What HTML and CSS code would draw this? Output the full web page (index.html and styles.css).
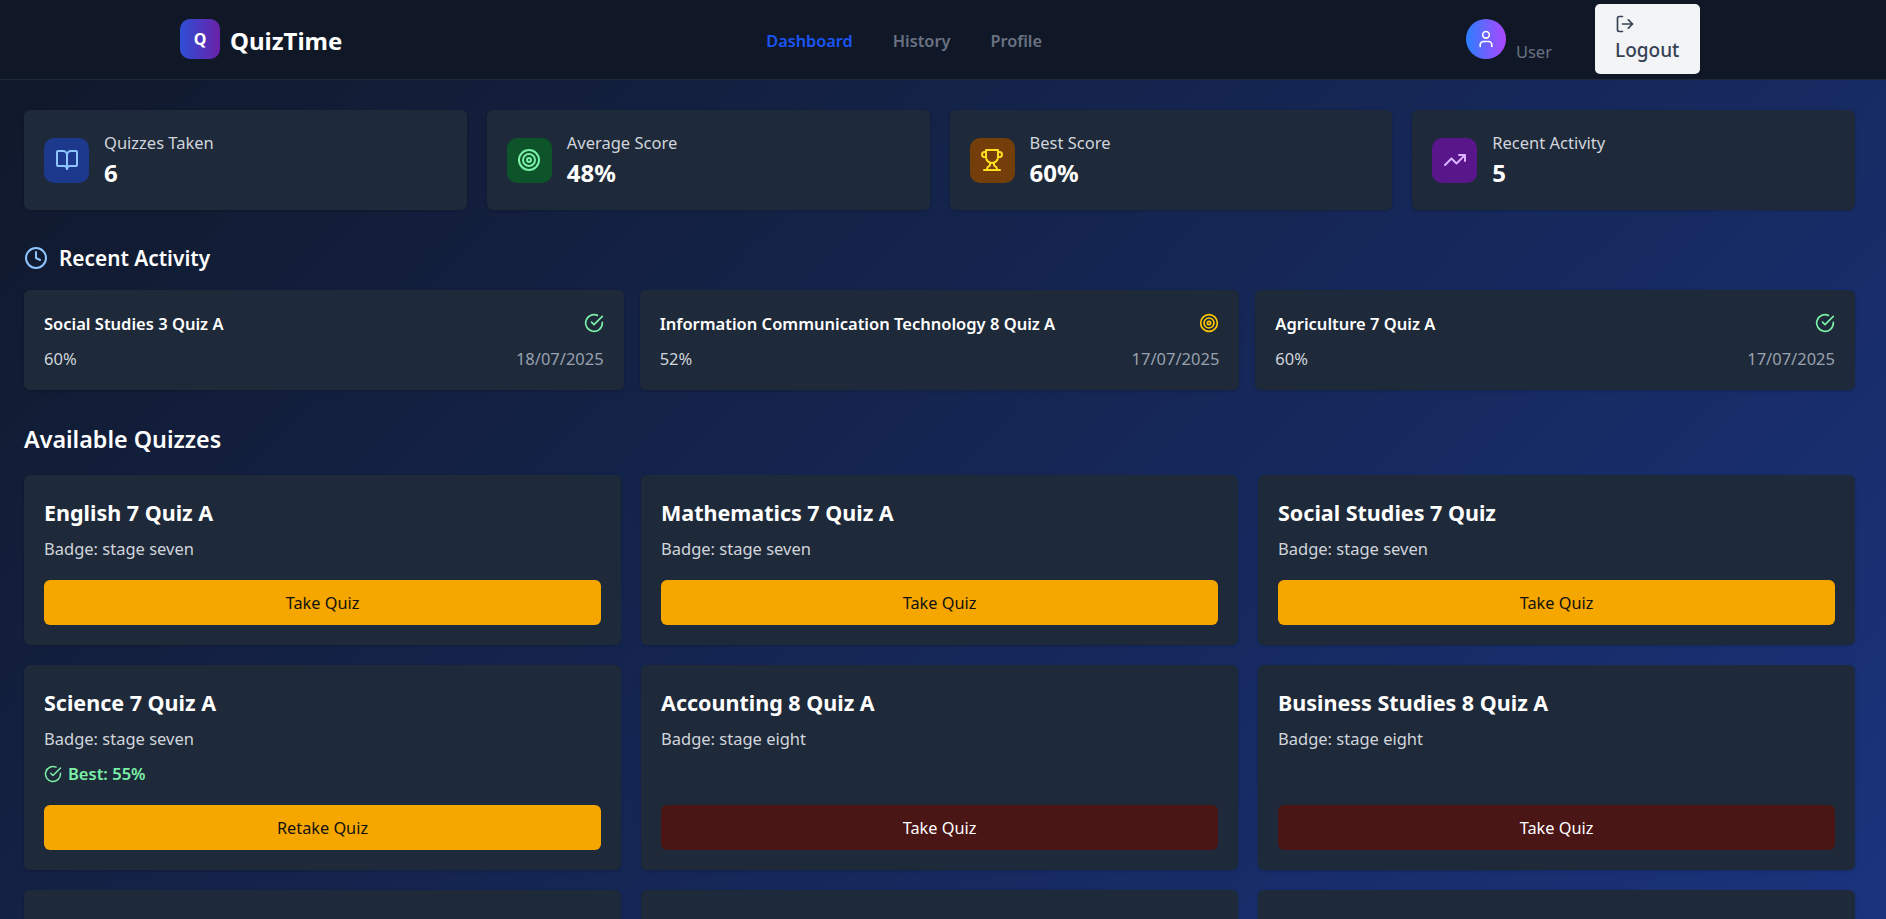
FILE: index.html
```html
<!DOCTYPE html>
<html lang="en">
<head>
    <meta charset="UTF-8">
    <meta name="viewport" content="width=device-width, initial-scale=1.0">
    <title>QuizTime</title>
    <link rel="stylesheet" href="styles.css">
</head>
<body>

    <header class="topbar">
        <div class="topbar-inner">
            <div class="brand">
                <div class="brand-mark">Q</div>
                <span class="brand-name">QuizTime</span>
            </div>
            <nav class="nav">
                <a class="nav-link active" href="#">Dashboard</a>
                <a class="nav-link" href="#">History</a>
                <a class="nav-link" href="#">Profile</a>
            </nav>
            <div class="account">
                <div class="avatar">
                    <svg class="icon-20" viewBox="0 0 24 24"><path d="M19 21v-2a4 4 0 0 0-4-4H9a4 4 0 0 0-4 4v2"/><circle cx="12" cy="7" r="4"/></svg>
                </div>
                <span class="user-name">User</span>
                <button class="logout" type="button">
                    <svg class="icon-20" viewBox="0 0 24 24"><path d="M9 21H5a2 2 0 0 1-2-2V5a2 2 0 0 1 2-2h4"/><polyline points="16 17 21 12 16 7"/><line x1="21" y1="12" x2="9" y2="12"/></svg>
                    <span>Logout</span>
                </button>
            </div>
        </div>
    </header>

    <main class="content">

        <section class="stats">
            <div class="card stat">
                <div class="stat-icon bg-blue">
                    <svg class="icon-24" viewBox="0 0 24 24"><path d="M12 7v14"/><path d="M3 18a1 1 0 0 1-1-1V4a1 1 0 0 1 1-1h5a4 4 0 0 1 4 4 4 4 0 0 1 4-4h5a1 1 0 0 1 1 1v13a1 1 0 0 1-1 1h-6a3 3 0 0 0-3 3 3 3 0 0 0-3-3z"/></svg>
                </div>
                <div>
                    <div class="stat-label">Quizzes Taken</div>
                    <div class="stat-value">6</div>
                </div>
            </div>
            <div class="card stat">
                <div class="stat-icon bg-green">
                    <svg class="icon-24" viewBox="0 0 24 24"><circle cx="12" cy="12" r="10"/><circle cx="12" cy="12" r="6"/><circle cx="12" cy="12" r="2"/></svg>
                </div>
                <div>
                    <div class="stat-label">Average Score</div>
                    <div class="stat-value">48%</div>
                </div>
            </div>
            <div class="card stat">
                <div class="stat-icon bg-orange">
                    <svg class="icon-24" viewBox="0 0 24 24"><path d="M6 9H4.5a2.5 2.5 0 0 1 0-5H6"/><path d="M18 9h1.5a2.5 2.5 0 0 0 0-5H18"/><path d="M4 22h16"/><path d="M10 14.66V17c0 .55-.47.98-.97 1.21C7.85 18.75 7 20.24 7 22"/><path d="M14 14.66V17c0 .55.47.98.97 1.21C16.15 18.75 17 20.24 17 22"/><path d="M18 2H6v7a6 6 0 0 0 12 0V2Z"/></svg>
                </div>
                <div>
                    <div class="stat-label">Best Score</div>
                    <div class="stat-value">60%</div>
                </div>
            </div>
            <div class="card stat">
                <div class="stat-icon bg-purple">
                    <svg class="icon-24" viewBox="0 0 24 24"><polyline points="22 7 13.5 15.5 8.5 10.5 2 17"/><polyline points="16 7 22 7 22 13"/></svg>
                </div>
                <div>
                    <div class="stat-label">Recent Activity</div>
                    <div class="stat-value">5</div>
                </div>
            </div>
        </section>

        <h2 class="section-title with-icon">
            <svg class="icon-24 clock" viewBox="0 0 24 24"><circle cx="12" cy="12" r="10"/><polyline points="12 6 12 12 16 14"/></svg>
            Recent Activity
        </h2>
        <section class="activity">
            <div class="card activity-card">
                <div class="row">
                    <span class="activity-name">Social Studies 3 Quiz A</span>
                    <svg class="icon-20 green" viewBox="0 0 24 24"><path d="M22 11.08V12a10 10 0 1 1-5.93-9.14"/><polyline points="22 4 12 14.01 9 11.01"/></svg>
                </div>
                <div class="row">
                    <span class="activity-score">60%</span>
                    <span class="activity-date">18/07/2025</span>
                </div>
            </div>
            <div class="card activity-card">
                <div class="row">
                    <span class="activity-name">Information Communication Technology 8 Quiz A</span>
                    <svg class="icon-20 yellow" viewBox="0 0 24 24"><circle cx="12" cy="12" r="10"/><circle cx="12" cy="12" r="6"/><circle cx="12" cy="12" r="2"/></svg>
                </div>
                <div class="row">
                    <span class="activity-score">52%</span>
                    <span class="activity-date">17/07/2025</span>
                </div>
            </div>
            <div class="card activity-card">
                <div class="row">
                    <span class="activity-name">Agriculture 7 Quiz A</span>
                    <svg class="icon-20 green" viewBox="0 0 24 24"><path d="M22 11.08V12a10 10 0 1 1-5.93-9.14"/><polyline points="22 4 12 14.01 9 11.01"/></svg>
                </div>
                <div class="row">
                    <span class="activity-score">60%</span>
                    <span class="activity-date">17/07/2025</span>
                </div>
            </div>
        </section>

        <h2 class="section-title large">Available Quizzes</h2>
        <section class="quizzes">
            <div class="card quiz">
                <h3 class="quiz-title">English 7 Quiz A</h3>
                <p class="quiz-badge">Badge: stage seven</p>
                <button class="quiz-btn" type="button">Take Quiz</button>
            </div>
            <div class="card quiz">
                <h3 class="quiz-title">Mathematics 7 Quiz A</h3>
                <p class="quiz-badge">Badge: stage seven</p>
                <button class="quiz-btn" type="button">Take Quiz</button>
            </div>
            <div class="card quiz">
                <h3 class="quiz-title">Social Studies 7 Quiz</h3>
                <p class="quiz-badge">Badge: stage seven</p>
                <button class="quiz-btn" type="button">Take Quiz</button>
            </div>
            <div class="card quiz">
                <h3 class="quiz-title">Science 7 Quiz A</h3>
                <p class="quiz-badge">Badge: stage seven</p>
                <div class="quiz-best">
                    <svg class="icon-18" viewBox="0 0 24 24"><path d="M22 11.08V12a10 10 0 1 1-5.93-9.14"/><polyline points="22 4 12 14.01 9 11.01"/></svg>
                    Best: 55%
                </div>
                <button class="quiz-btn" type="button">Retake Quiz</button>
            </div>
            <div class="card quiz">
                <h3 class="quiz-title">Accounting 8 Quiz A</h3>
                <p class="quiz-badge">Badge: stage eight</p>
                <button class="quiz-btn locked" type="button">Take Quiz</button>
            </div>
            <div class="card quiz">
                <h3 class="quiz-title">Business Studies 8 Quiz A</h3>
                <p class="quiz-badge">Badge: stage eight</p>
                <button class="quiz-btn locked" type="button">Take Quiz</button>
            </div>
            <div class="card quiz"></div>
            <div class="card quiz"></div>
            <div class="card quiz"></div>
        </section>

    </main>

</body>
</html>
```

FILE: styles.css
```css
* {
    box-sizing: border-box;
}
html, body {
    height: 919px;
    overflow: hidden;
}
body {
    margin: 0;
    font-family: "Noto Sans", Roboto, sans-serif;
    font-size: 16.5px;
    color: #fff;
    background: linear-gradient(135deg, #101828 0%, #1c398e 100%);
    background-size: 100% 1500px;
}
svg {
    display: block;
    fill: none;
    stroke: currentColor;
    stroke-width: 2;
    stroke-linecap: round;
    stroke-linejoin: round;
    flex-shrink: 0;
}
.icon-18 { width: 18px; height: 18px; }
.icon-20 { width: 20px; height: 20px; }
.icon-24 { width: 24px; height: 24px; }

/* barra superior */
.topbar {
    height: 80px;
    background: #101828;
    border-bottom: 1px solid #1e2939;
}
.topbar-inner {
    width: 1520px;
    margin-left: 180px;
    height: 78px;
    display: flex;
    justify-content: space-between;
    align-items: center;
}
.brand {
    display: flex;
    align-items: center;
    gap: 10px;
}
.brand-mark {
    width: 40px;
    height: 40px;
    border-radius: 10px;
    background: linear-gradient(90deg, #2d4fd6, #6b21a8);
    display: flex;
    align-items: center;
    justify-content: center;
    font-size: 16px;
    font-weight: 700;
}
.brand-name {
    font-size: 24px;
    font-weight: 700;
    padding-top: 2px;
}
.nav {
    display: flex;
    gap: 40px;
    padding-top: 3px;
}
.nav-link {
    color: #6a7282;
    font-size: 16.3px;
    font-weight: 600;
    text-decoration: none;
}
.nav-link.active {
    color: #1a54f5;
}
.account {
    display: flex;
    align-items: center;
}
.avatar {
    width: 40px;
    height: 40px;
    border-radius: 50%;
    background: linear-gradient(90deg, #2b7fff, #ad46ff);
    display: flex;
    align-items: center;
    justify-content: center;
    margin-right: 10px;
}
.user-name {
    align-self: flex-end;
    margin-bottom: 16px;
    line-height: 12px;
    color: #6a7282;
    margin-right: 43px;
}
.logout {
    width: 105px;
    height: 70px;
    padding: 10px 20px 0;
    border: none;
    border-radius: 5px;
    background: #f3f4f6;
    color: #364153;
    font-family: inherit;
    font-size: 19px;
    font-weight: 500;
    display: flex;
    flex-direction: column;
    align-items: flex-start;
    gap: 3px;
}

/* conteudo */
.content {
    width: 1880px;
    padding: 30px 25px 0 24px;
}
.card {
    background: #1e2939;
    border-radius: 6px;
    box-shadow: 0 1px 3px rgba(0, 0, 0, 0.2);
}
.stats {
    display: grid;
    grid-template-columns: repeat(4, 1fr);
    gap: 20px;
}
.stat {
    height: 100px;
    padding: 0 20px;
    display: flex;
    align-items: center;
    gap: 15px;
}
.stat-icon {
    width: 45px;
    height: 45px;
    border-radius: 10px;
    display: flex;
    align-items: center;
    justify-content: center;
}
.bg-blue { background: #1c398e; color: #8ec5ff; }
.bg-green { background: #0d542b; color: #7bf1a8; }
.bg-orange { background: #733e0a; color: #ffdf20; }
.bg-purple { background: #59168b; color: #dab2ff; }
.stat-label {
    color: #d1d5dc;
    line-height: 24px;
}
.stat-value {
    font-size: 24px;
    font-weight: 700;
    line-height: 32px;
    margin-top: 2px;
}
.section-title {
    margin: 0;
    font-weight: 600;
}
.with-icon {
    display: flex;
    align-items: center;
    gap: 11px;
    font-size: 20.8px;
    margin-top: 34px;
    margin-bottom: 18px;
    height: 28px;
}
.clock {
    color: #8ec5ff;
}
.activity {
    display: grid;
    grid-template-columns: repeat(3, 1fr);
    gap: 16px;
}
.activity-card {
    height: 100px;
    padding: 19px 20px;
}
.row {
    display: flex;
    justify-content: space-between;
    align-items: center;
    height: 28px;
}
.row + .row {
    margin-top: 7px;
}
.activity-name {
    font-weight: 600;
}
.activity-score {
    color: #d1d5dc;
}
.activity-date {
    color: #99a1af;
}
.green { color: #7bf1a8; }
.yellow { color: #fdc700; }
.large {
    font-size: 23.3px;
    margin-top: 33px;
    margin-bottom: 20px;
    line-height: 32px;
}
.quizzes {
    display: grid;
    grid-template-columns: repeat(3, 1fr);
    gap: 20px;
}
.quiz {
    padding: 20px;
    min-height: 170px;
    display: flex;
    flex-direction: column;
}
.quiz-title {
    margin: 4px 0 0;
    font-size: 21.5px;
    font-weight: 700;
    line-height: 28px;
}
.quiz-badge {
    margin: 10px 0 0;
    color: #d1d5dc;
    line-height: 24px;
}
.quiz-best {
    display: flex;
    align-items: center;
    gap: 6px;
    margin: 11px 0 19px;
    color: #7bf1a8;
    font-weight: 600;
    line-height: 24px;
}
.quiz-btn {
    margin-top: auto;
    height: 45px;
    padding-top: 2px;
    border: none;
    border-radius: 6px;
    background: #f5a700;
    color: #111;
    font-family: inherit;
    font-size: 16.3px;
}
.quiz-btn.locked {
    background: #4a1515;
    color: #fff;
}
```
